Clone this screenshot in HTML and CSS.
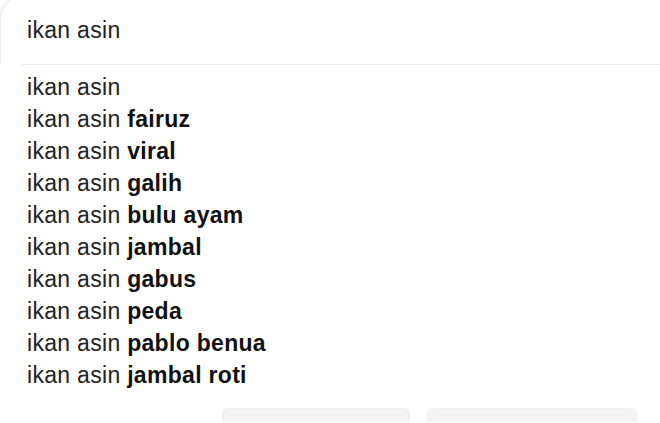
FILE: index.html
```html
<!DOCTYPE html>
<html lang="id">
<head>
    <meta charset="UTF-8" />
    <meta name="viewport" content="width=device-width, initial-scale=1.0"/>
    <title>ikan asin</title>
    <link rel="stylesheet" href="styles.css">
</head>
<body>
<div class="search-box">
    <div class="query">ikan asin</div>
</div>

<div class="dropdown">
    <div class="divider"></div>
    <ul class="suggestions">
        <li>ikan asin</li>
        <li>ikan asin <b>fairuz</b></li>
        <li>ikan asin <b>viral</b></li>
        <li>ikan asin <b>galih</b></li>
        <li>ikan asin <b>bulu ayam</b></li>
        <li>ikan asin <b>jambal</b></li>
        <li>ikan asin <b>gabus</b></li>
        <li>ikan asin <b>peda</b></li>
        <li>ikan asin <b>pablo benua</b></li>
        <li>ikan asin <b>jambal roti</b></li>
    </ul>

    <div class="buttons">
        <div class="btn btn-search"></div>
        <div class="btn btn-lucky"></div>
    </div>
</div>
</body>
</html>
```

FILE: styles.css
```css
body {
    font-family: "Liberation Sans", Arial, sans-serif;
    background: #ffffff;
    color: #222222;
    margin: 0;
    overflow: hidden;
}

.search-box {
    margin: -4px 0 0 1px;
    height: 50px;
    padding-top: 18px;
    border-radius: 24px 0 0 0;
    background: #ffffff;
    box-shadow: 0 1px 5px rgba(32, 33, 36, 0.22);
    position: relative;
    z-index: 1;
}

.query {
    padding-left: 26px;
    font-size: 23px;
    line-height: 32px;
    letter-spacing: 0.3px;
    color: #222222;
}

.dropdown {
    position: relative;
    z-index: 2;
    background: #ffffff;
}

.divider {
    margin-left: 22px;
    border-top: 1px solid #e6e7ef;
}

.suggestions {
    list-style: none;
    margin: 0;
    padding: 6px 0 0 27px;
}

.suggestions li {
    font-size: 23px;
    line-height: 32px;
    letter-spacing: 0.3px;
    color: #222222;
    white-space: nowrap;
}

.suggestions b {
    color: #111111;
}

.buttons {
    display: flex;
    gap: 17px;
    margin-top: 17px;
    padding-left: 222px;
}

.btn {
    height: 13px;
    background: #f3f3f3;
    border: 1px solid #f0f0f0;
    border-bottom: none;
    border-radius: 6px 6px 0 0;
}

.btn-search {
    width: 186px;
}

.btn-lucky {
    width: 208px;
}
```
